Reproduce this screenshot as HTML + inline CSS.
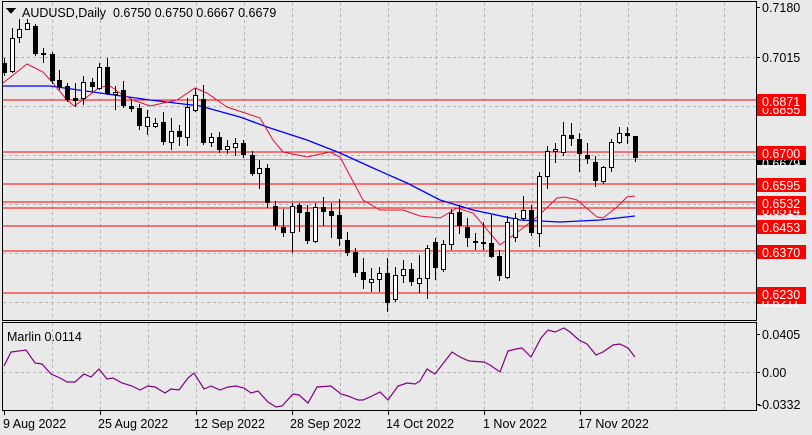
<!DOCTYPE html>
<html><head><meta charset="utf-8"><style>
html,body{margin:0;padding:0;background:#e9e9e9;}
svg{display:block;font-family:"Liberation Sans","DejaVu Sans",sans-serif;}
</style></head><body>
<svg width="812" height="435" viewBox="0 0 812 435" xmlns="http://www.w3.org/2000/svg" shape-rendering="crispEdges">
<rect width="812" height="435" fill="#e9e9e9"/>
<g stroke="#b4b4b4" stroke-dasharray="3,3" stroke-width="1">
<path d="M52.5 2V320M100.5 2V320M148.5 2V320M196.5 2V320M244.5 2V320M292.5 2V320M340.5 2V320M388.5 2V320M436.5 2V320M484.5 2V320M532.5 2V320M580.5 2V320M628.5 2V320M676.5 2V320M724.5 2V320"/>
<path d="M52.5 323V410M100.5 323V410M148.5 323V410M196.5 323V410M244.5 323V410M292.5 323V410M340.5 323V410M388.5 323V410M436.5 323V410M484.5 323V410M532.5 323V410M580.5 323V410M628.5 323V410M676.5 323V410M724.5 323V410"/>
<path d="M3 57.5H756M3 106.5H756M3 155.5H756M3 204.5H756M3 253.5H756M3 302.5H756M3 372.5H756"/>
</g>
<path d="M3 159.5H756" stroke="#a8a8a8"/>
<g stroke="#ff0000" stroke-width="1.3">
<path d="M3 100H756M3 152H756M3 184H756M3 202H756M3 208H756M3 226H756M3 251H756M3 293H756"/>
</g>
<g fill="none" shape-rendering="auto">
<polyline stroke="#0000ff" stroke-width="1.3" points="3,86 50,86 100,93 150,100 200,106 240,117 270,128 307,140 340,153 373,168 407,183 440,200 473,210 520,220 560,222 600,220 635,216"/>
<polyline stroke="#e0103a" stroke-width="1" points="3,83 27,64 43,72 52,82 67,100 74,106 87,97 100,87 110,86 120,93 133,100 150,106 177,100 195,88 207,93 227,107 260,118 273,140 283,152 307,157 330,152 340,157 363,200 380,210 403,210 420,216 440,218 457,208 473,213 500,245 523,228 537,217 557,198 565,197 577,200 597,217 603,218 617,207 627,197 635,196"/>
</g>
<path stroke="#000" fill="none" d="M4.5 58V76M12.5 28V73M19.5 19V43M27.5 19V30M35.5 24V56M43.5 48V63M52.5 52V84M59.5 70V90M67.5 83V102M75.5 83V107M83.5 76V105M92.5 78V92M99.5 63V90M107.5 58V95M115.5 86V110M123.5 81V108M131.5 100V112M139.5 104V130M147.5 110V135M155.5 118V128M163.5 112V145M171.5 118V150M179.5 125V146M187.5 98V146M195.5 88V112M203.5 85V145M211.5 133V147M219.5 132V153M227.5 140V154M235.5 138V156M243.5 140V158M252.5 151V176M259.5 160V189M267.5 164V208M275.5 201V230M283.5 209V237M292.5 203V253M299.5 203V232M307.5 205V244M315.5 203V243M323.5 197V226M331.5 203V238M339.5 199V246M347.5 232V256M355.5 248V277M363.5 258V289M371.5 268V292M379.5 267V292M387.5 258V312M395.5 267V302M403.5 260V283M411.5 263V286M419.5 255V293M427.5 245V299M435.5 238V280M443.5 240V272M451.5 209V250M459.5 205V234M467.5 218V247M475.5 233V250M483.5 222V250M491.5 215V258M499.5 250V281M507.5 216V279M515.5 213V242M523.5 196V221M531.5 205V236M539.5 172V247M547.5 146V189M555.5 143V163M563.5 122V156M571.5 123V146M579.5 133V172M587.5 143V164M595.5 156V187M603.5 166V184M611.5 139V172M619.5 127V144M627.5 127V144M635.5 136V162"/>
<path fill="#000" d="M2 63h5v10h-5zM33 26h5v28h-5zM41 53h5v2h-5zM50 54h5v27h-5zM57 80h5v7h-5zM65 86h5v14h-5zM73 98h5v3h-5zM90 82h5v5h-5zM105 67h5v27h-5zM121 90h5v16h-5zM129 106h5v3h-5zM137 108h5v18h-5zM161 122h5v20h-5zM177 131h5v6h-5zM201 99h5v44h-5zM217 137h5v13h-5zM241 143h5v12h-5zM250 155h5v19h-5zM265 168h5v35h-5zM273 206h5v20h-5zM281 227h5v6h-5zM297 205h5v8h-5zM305 212h5v29h-5zM321 207h5v5h-5zM329 211h5v5h-5zM337 215h5v24h-5zM345 240h5v13h-5zM353 252h5v21h-5zM361 272h5v8h-5zM385 273h5v30h-5zM409 269h5v13h-5zM433 242h5v26h-5zM457 212h5v14h-5zM465 227h5v11h-5zM473 241h5v2h-5zM481 242h5v2h-5zM489 243h5v14h-5zM497 256h5v20h-5zM529 210h5v23h-5zM569 135h5v4h-5zM577 139h5v15h-5zM585 155h5v4h-5zM593 162h5v19h-5zM625 133h5v3h-5zM633 136h5v22h-5z"/>
<path fill="#fff" stroke="#000" d="M10.5 38.5h4v33h-4zM17.5 29.5h4v8h-4zM25.5 23.5h4v6h-4zM81.5 82.5h4v16h-4zM97.5 67.5h4v21h-4zM113.5 92.5h4v2h-4zM145.5 117.5h4v9h-4zM153.5 123.5h4v3h-4zM169.5 131.5h4v11h-4zM185.5 107.5h4v30h-4zM193.5 95.5h4v15h-4zM209.5 137.5h4v5h-4zM225.5 146.5h4v3h-4zM233.5 143.5h4v4h-4zM257.5 168.5h4v5h-4zM290.5 206.5h4v26h-4zM313.5 207.5h4v34h-4zM369.5 279.5h4v3h-4zM377.5 273.5h4v6h-4zM393.5 275.5h4v24h-4zM401.5 269.5h4v6h-4zM417.5 278.5h4v5h-4zM425.5 248.5h4v30h-4zM441.5 244.5h4v25h-4zM449.5 213.5h4v31h-4zM505.5 222.5h4v55h-4zM513.5 218.5h4v19h-4zM521.5 210.5h4v8h-4zM537.5 176.5h4v57h-4zM545.5 151.5h4v25h-4zM553.5 149.5h4v2h-4zM561.5 135.5h4v17h-4zM601.5 167.5h4v14h-4zM609.5 142.5h4v25h-4zM617.5 133.5h4v9h-4z"/>
<g fill="none" stroke="#000" stroke-width="1">
<rect x="2.5" y="1.5" width="754" height="319"/>
<rect x="2.5" y="322.5" width="754" height="88"/>
</g>
<g stroke="#000"><path d="M756 7.5h4M756 57.5h4M756 106.5h4M756 155.5h4M756 204.5h4M756 253.5h4M756 302.5h4M756 334.5h4M756 372.5h4M756 404.5h4"/>
<path d="M4.5 411v4M100.5 411v4M196.5 411v4M292.5 411v4M388.5 411v4M484.5 411v4M580.5 411v4"/></g>
<polyline fill="none" stroke="#800080" stroke-width="1.2" shape-rendering="auto" points="4,366 11,352 26,350 35,363 42,364 51,374 60,378 67,382 75,382 84,374 91,377 99,369 107,379 113,378 122,383 132,386 140,390 148,386 155,387 165,393 171,389 179,390 188,378 194,373 204,389 211,386 220,390 228,387 236,386 244,388 251,393 258,391 268,402 276,407 282,406 293,394 299,395 308,403 317,387 331,386 341,394 348,396 358,400 363,400 372,396 380,392 388,400 398,386 407,383 415,384 420,381 427,369 435,374 452,352 460,357 469,361 484,362 490,365 500,372 508,351 516,349 522,348 531,357 541,338 548,330 555,332 564,328 570,332 579,340 587,344 596,355 603,352 613,345 620,344 628,348 635,357"/>
<g font-size="12.5" fill="#000">
<path d="M6 8h10l-5 6z" fill="#000"/>
<text x="22" y="17">AUDUSD,Daily&#160; 0.6750 0.6750 0.6667 0.6679</text>
<text x="762" y="12">0.7180</text>
<text x="762" y="62">0.7015</text>
<text x="7" y="341">Marlin 0.0114</text>
<text x="762" y="339">0.0405</text>
<text x="762" y="377">0.00</text>
<text x="758" y="409">-0.0332</text>
<text x="3" y="428">9 Aug 2022</text>
<text x="98" y="428">25 Aug 2022</text>
<text x="194" y="428">12 Sep 2022</text>
<text x="290" y="428">28 Sep 2022</text>
<text x="386" y="428">14 Oct 2022</text>
<text x="483" y="428">1 Nov 2022</text>
<text x="578" y="428">17 Nov 2022</text>
</g>
<g font-size="12.5" fill="#fff">
<rect x="757" y="102" width="49" height="14" fill="#ff0000"/><text x="762" y="114">0.6855</text>
<rect x="757" y="94" width="49" height="14" fill="#ff0000"/><text x="762" y="106">0.6871</text>
<rect x="757" y="157" width="49" height="8" fill="#000"/><text x="762" y="168">0.6679</text>
<rect x="757" y="146" width="49" height="14" fill="#ff0000"/><text x="762" y="158">0.6700</text>
<rect x="757" y="178" width="49" height="14" fill="#ff0000"/><text x="762" y="190">0.6595</text>
<rect x="757" y="205" width="49" height="10" fill="#ff0000"/><text x="762" y="215">0.6514</text>
<rect x="757" y="196" width="49" height="14" fill="#ff0000"/><text x="762" y="208">0.6532</text>
<rect x="757" y="220" width="49" height="14" fill="#ff0000"/><text x="762" y="232">0.6453</text>
<rect x="757" y="245" width="49" height="14" fill="#ff0000"/><text x="762" y="257">0.6370</text>
<rect x="757" y="296" width="49" height="8" fill="#ff0000"/><text x="762" y="307">0.6211</text>
<rect x="757" y="287" width="49" height="14" fill="#ff0000"/><text x="762" y="299">0.6230</text>
</g>
</svg>
</body></html>
